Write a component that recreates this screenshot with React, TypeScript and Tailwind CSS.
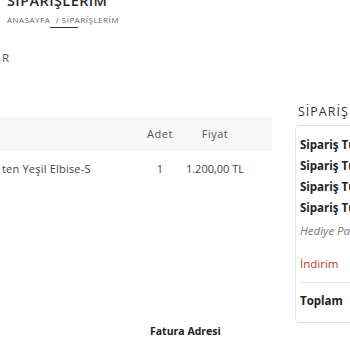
const font = { fontFamily: '"Open Sans", "Liberation Sans", sans-serif' }

const summary = ['Sipariş', 'Sipariş', 'Sipariş', 'Sipariş']

export default function App() {
  return (
    <div className="relative h-[350px] w-[350px] overflow-hidden bg-white text-[#333]" style={font}>
      {/* page title, cut at the top */}
      <div className="-mt-[9px] pl-[7px]">
        <h1 className="text-[14.5px] font-semibold leading-[19px] tracking-[0.4px] text-[#2b2b2b]">SİPARİŞLERİM</h1>
        <div className="mt-[5px] text-[8px] leading-[10px] tracking-[0.5px] text-[#666]">
          ANASAYFA <span className="ml-[3px]">/ SİPARİŞLERİM</span>
        </div>
        <div className="ml-[43px] mt-[2px] h-[1px] w-[28px] bg-[#333]" />
      </div>

      <div className="mt-[23px] flex">
        {/* left column */}
        <div className="w-[272px] shrink-0">
          <div className="pl-[2px] text-[11.5px] leading-[14px] text-[#555]">R</div>
          <div className="mt-[52px]">
            <div className="flex h-[34px] items-center bg-[#f7f7f7] text-[11px] text-[#555]">
              <div className="w-[140px]" />
              <div className="w-[40px] text-center tracking-[0.5px]">Adet</div>
              <div className="w-[70px] text-center tracking-[0.5px]">Fiyat</div>
            </div>
            <div className="flex h-[36px] items-center text-[11px] text-[#444]">
              <div className="w-[140px] pl-[2px] tracking-[0.2px]">ten Yeşil Elbise-S</div>
              <div className="w-[40px] text-center">1</div>
              <div className="w-[70px] text-center">1.200,00 TL</div>
            </div>
          </div>
        </div>

        {/* right column: order summary */}
        <div className="ml-[23px] w-[200px] shrink-0">
          <div className="mt-[53px] pl-[3px] text-[12.5px] leading-[16px] tracking-[1px] text-[#333]">SİPARİŞ ÖZETİ</div>
          <div className="mt-[5px] h-[198px] rounded-[4px] border border-[#e2e2e2] px-[4px] pt-[11px]">
            <div className="flex flex-col gap-[5px] text-[11.5px] font-bold leading-[16px] text-[#222]">
              {summary.map((s, i) => (
                <div key={i}>{s} Tutarı</div>
              ))}
            </div>
            <div className="mt-[7px] text-[11.5px] italic leading-[16px] text-[#777]">Hediye Paketi</div>
            <div className="mt-[17px] text-[11.5px] leading-[16px] text-[#c0392b]">İndirim</div>
            <div className="mt-[10px] border-t border-[#e6e6e6]" />
            <div className="mt-[10px] text-[11.5px] font-bold leading-[16px] text-[#222]">Toplam</div>
          </div>
        </div>
      </div>

      <div className="mt-[1px] pl-[150px] text-[10.5px] font-bold text-[#222]">Fatura Adresi</div>
    </div>
  )
}
